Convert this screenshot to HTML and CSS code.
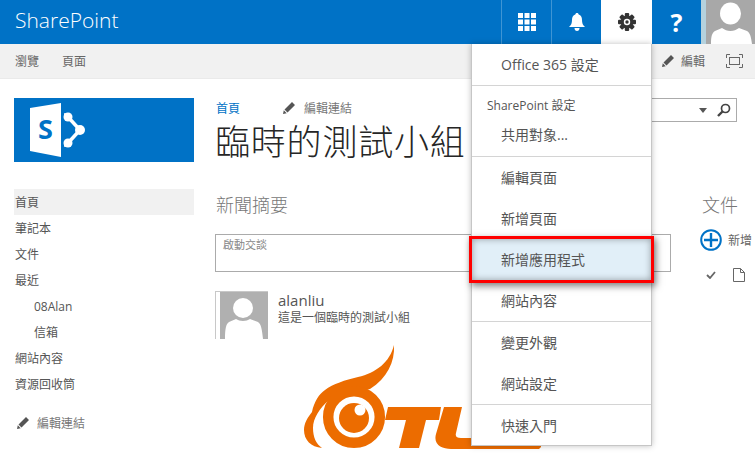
FILE: index.html
```html
<!DOCTYPE html>
<html>
<head>
  <title>臨時的測試小組</title>
  <link rel="stylesheet" href="styles.css">
</head>
<body>
  <div class="topBar">
    <div class="brand">SharePoint</div>
    <div class="tile">
      <svg width="18" height="18" viewBox="0 0 18 18" fill="#fff">
        <rect x="0" y="0" width="5" height="5"/><rect x="6.500" y="0" width="5" height="5"/><rect x="13" y="0" width="5" height="5"/>
        <rect x="0" y="6.500" width="5" height="5"/><rect x="6.500" y="6.500" width="5" height="5"/><rect x="13" y="6.500" width="5" height="5"/>
        <rect x="0" y="13" width="5" height="5"/><rect x="6.500" y="13" width="5" height="5"/><rect x="13" y="13" width="5" height="5"/>
      </svg>
    </div>
    <div class="tile">
      <svg width="16" height="18" viewBox="0 0 16 18" fill="#fff">
        <path d="M8 0c1 0 1.600.6 1.700 1.500C12 2.300 13 4.300 13 7c0 3 .7 5 3 7H0c2.300-2 3-4 3-7 0-2.700 1-4.700 3.300-5.500C6.400.6 7 0 8 0z"/>
        <path d="M5.500 15h5c0 1.700-1 3-2.500 3s-2.500-1.300-2.500-3z"/>
      </svg>
    </div>
    <div class="tile gearTile">
      <svg width="18" height="18" viewBox="0 0 18 18" fill="#333">
        <rect x="6.800" y="0" width="4.400" height="18" rx="1"/>
        <rect x="6.800" y="0" width="4.400" height="18" rx="1" transform="rotate(45 9 9)"/>
        <rect x="6.800" y="0" width="4.400" height="18" rx="1" transform="rotate(90 9 9)"/>
        <rect x="6.800" y="0" width="4.400" height="18" rx="1" transform="rotate(135 9 9)"/>
        <circle cx="9" cy="9" r="6.500"/>
        <circle cx="9" cy="9" r="3.200" fill="#fff"/>
        <circle cx="9" cy="9" r="1.700"/>
      </svg>
    </div>
    <div class="tile helpTile">?</div>
    <div class="meAvatar">
      <svg width="49" height="44" viewBox="0 0 49 44" fill="#fff">
        <ellipse cx="24.500" cy="13.500" rx="10.500" ry="11"/>
        <path d="M5 44c0-8 1-11 4-13l7-3c3 2 5 3 8.500 3s5.500-1 8.500-3l8 3c3 2 4 5 5 13z"/>
      </svg>
    </div>
  </div>

  <div class="subBar">
    <span class="subTab">瀏覽</span>
    <span class="subTab">頁面</span>
    <div class="subRight">
      <svg class="pencil" width="12" height="12" viewBox="0 0 12 12"><path d="M9 0l3 3-7.500 7.500-3-3zM.8 8.300l2.900 2.900L0 12z" fill="#555"/></svg>
      <span class="subEdit">編輯</span>
      <svg class="focus" width="17" height="14" viewBox="0 0 17 14" fill="none" stroke="#666">
        <path d="M.5 4V.5H4M13 .5h3.500V4M16.500 10v3.500H13M4 13.500H.5V10"/>
        <rect x="3.500" y="3.500" width="10" height="7"/>
      </svg>
    </div>
  </div>

  <div class="page">
    <div class="sideCol">
      <div class="siteLogo">
        <svg width="80" height="64" viewBox="0 0 80 64">
          <path d="M16 10l31-5v54l-31-6z" fill="#fff"/>
          <text x="24" y="41" class="logoS">S</text>
          <g fill="none" stroke="#fff" stroke-width="3.500">
            <path d="M54 19l12 13-12 13"/>
            <path d="M50 17h4M50 47h4"/>
          </g>
          <g fill="#fff">
            <circle cx="54" cy="19" r="4.500"/>
            <circle cx="66" cy="32" r="5"/>
            <circle cx="54" cy="45" r="4.500"/>
          </g>
        </svg>
      </div>
      <ul class="nav">
        <li class="active">首頁</li>
        <li>筆記本</li>
        <li>文件</li>
        <li>最近</li>
        <li class="sub">08Alan</li>
        <li class="sub">信箱</li>
        <li>網站內容</li>
        <li>資源回收筒</li>
      </ul>
      <div class="navEdit">
        <svg class="pencil" width="12" height="12" viewBox="0 0 12 12"><path d="M9 0l3 3-7.500 7.500-3-3zM.8 8.300l2.900 2.900L0 12z" fill="#555"/></svg>
        <span>編輯連結</span>
      </div>
    </div>

    <div class="mainCol">
      <div class="titleRow">
        <div>
          <div class="crumbs">
            <a class="crumbHome">首頁</a>
            <svg class="pencil" width="12" height="12" viewBox="0 0 12 12"><path d="M9 0l3 3-7.500 7.500-3-3zM.8 8.300l2.900 2.900L0 12z" fill="#555"/></svg>
            <span class="crumbEdit">編輯連結</span>
          </div>
          <h1>臨時的測試小組</h1>
        </div>
        <div class="searchBox">
          <span class="caret"></span>
          <svg width="14" height="14" viewBox="0 0 14 14" fill="none" stroke="#444">
            <circle cx="8.500" cy="5.500" r="4" stroke-width="1.700"/>
            <path d="M5.500 8.500L1 13" stroke-width="2.400"/>
          </svg>
        </div>
      </div>

      <div class="columns">
        <div class="newsCol">
          <h2>新聞摘要</h2>
          <div class="startBox">啟動交談</div>
          <div class="post">
            <div class="postAvatar">
              <svg width="48" height="47" viewBox="0 0 48 47" fill="#fff">
                <circle cx="23" cy="16" r="10"/>
                <path d="M5 47c0-10 1-15 4-17l7-3c2 1 4 2 7 2s5-1 7-2l8 3c3 2 4 7 5 17z"/>
              </svg>
            </div>
            <div>
              <div class="postName">alanliu</div>
              <div class="postText">這是一個臨時的測試小組</div>
            </div>
          </div>
        </div>
        <div class="docsCol">
          <h2>文件</h2>
          <div class="newDoc">
            <svg width="22" height="22" viewBox="0 0 22 22" fill="none" stroke="#0072c6">
              <circle cx="11" cy="11" r="9.800" stroke-width="2"/>
              <path d="M11 4v14M4 11h14" stroke-width="2.400"/>
            </svg>
            <span>新增</span>
          </div>
          <div class="docRow">
            <svg width="10" height="8" viewBox="0 0 10 8" fill="none" stroke="#666" stroke-width="1.800"><path d="M1 4l3 3 5-6"/></svg>
            <svg width="12" height="14" viewBox="0 0 12 14" fill="#fff" stroke="#666"><path d="M.5.500h7l4 4v9H.5z"/><path d="M7.500.500v4h4" fill="none"/></svg>
          </div>
        </div>
      </div>
    </div>
  </div>

  <!-- watermark stamped on the shot -->
  <svg class="watermark" width="240" height="110" viewBox="303 345 240 110" fill="#ec6c00">
    <path d="M394 345C395 362 387 378 370 389L345 395 328 401C320 408 313 418 313 428 313 437 316 444 322 448 311 447 304 440 304 430 304 423 308 417 312 412 314 402 319 394 325 390 333 384 345 380 358 377 376 373 390 362 394 345z"/>
    <circle cx="354" cy="417" r="25.800" fill="none" stroke="#ec6c00" stroke-width="10.500"/>
    <circle cx="354" cy="418" r="15"/>
    <circle cx="360" cy="410" r="5.500" fill="#fff"/>
    <path d="M388 407h53l-2 13h-13l-7 28h-20l7-28h-21z"/>
    <path d="M444 407h18l-6 26c-1 4 1 5 5 5h40l40-1v10l-2 2h-88c-9 0-18-4-15-15z"/>
  </svg>

  <div class="settingsMenu">
    <div class="menuItem top">Office 365 設定</div>
    <div class="menuGroup">
      <div class="menuHead">SharePoint 設定</div>
      <div class="menuItem share">共用對象...</div>
    </div>
    <div class="menuGroup">
      <div class="menuItem">編輯頁面</div>
      <div class="menuItem">新增頁面</div>
      <div class="menuItem picked">新增應用程式</div>
      <div class="menuItem">網站內容</div>
    </div>
    <div class="menuGroup">
      <div class="menuItem">變更外觀</div>
      <div class="menuItem">網站設定</div>
    </div>
    <div class="menuGroup">
      <div class="menuItem">快速入門</div>
    </div>
  </div>
</body>
</html>
```

FILE: styles.css
```css
html,
body {
  margin: 0;
  padding: 0;
  height: 100%;
  overflow: hidden;
}

body {
  position: relative;
  background-color: #fff;
  color: #555;
  font-family: "Open Sans", "Noto Sans CJK TC", sans-serif;
  font-size: 12px;
}

.topBar {
  display: flex;
  align-items: stretch;
  height: 44px;
  background-color: #0072c6;
}

.brand {
  flex: 1;
  padding-left: 15px;
  color: #fff;
  font-size: 21px;
  font-weight: 300;
  line-height: 40px;
}

.tile {
  display: flex;
  align-items: center;
  justify-content: center;
  width: 49px;
  border-left: 1px solid #3f95d4;
}

.gearTile {
  width: 51px;
  border-left: none;
  background-color: #fff;
}

.helpTile {
  border-left: none;
  color: #fff;
  font-size: 25px;
  font-weight: 700;
}

.meAvatar {
  width: 49px;
  border-left: 5px solid #b5d2de;
  background-color: #a8a8a8;
}

.meAvatar svg {
  display: block;
}

.subBar {
  display: flex;
  align-items: center;
  height: 35px;
  padding-left: 15px;
  background-color: #f1f1f1;
  border-bottom: 1px solid #eaeaea;
  box-sizing: border-box;
  color: #666;
}

.subTab {
  width: 47px;
}

.subRight {
  display: flex;
  align-items: center;
  margin-left: auto;
  margin-right: 12px;
}

.subEdit {
  margin-left: 7px;
  margin-right: 21px;
}

.page {
  display: flex;
  padding-top: 19px;
}

.sideCol {
  width: 180px;
  margin-left: 14px;
  flex-shrink: 0;
}

.siteLogo {
  height: 64px;
  background-color: #0072c6;
}

.siteLogo svg {
  display: block;
}

.logoS {
  fill: #0072c6;
  font-family: "Open Sans", sans-serif;
  font-size: 27px;
  font-weight: 700;
}

.nav {
  list-style: none;
  margin: 27px 0 0;
  padding: 0;
}

.nav li {
  height: 26px;
  line-height: 28px;
  padding-left: 1px;
}

.nav .active {
  background-color: #f1f1f1;
}

.nav .sub {
  padding-left: 20px;
}

.navEdit {
  display: flex;
  align-items: center;
  gap: 8px;
  margin-top: 13px;
  height: 26px;
  padding-left: 3px;
  color: #777;
}

.mainCol {
  flex: 1;
  min-width: 0;
  padding-left: 22px;
  padding-right: 18px;
}

.titleRow {
  display: flex;
  justify-content: space-between;
  align-items: flex-start;
}

.crumbs {
  display: flex;
  align-items: center;
  height: 20px;
}

.crumbHome {
  width: 67px;
  color: #0072c6;
}

.crumbEdit {
  margin-left: 9px;
  color: #777;
}

h1 {
  margin: 2px 0 0 -1px;
  color: #262626;
  font-size: 35px;
  font-weight: 300;
  line-height: 44px;
  letter-spacing: .8px;
  white-space: nowrap;
}

.searchBox {
  display: flex;
  align-items: center;
  justify-content: flex-end;
  gap: 10px;
  width: 200px;
  height: 24px;
  padding-right: 5px;
  border: 1px solid #ababab;
  box-sizing: border-box;
}

.caret {
  border-left: 4px solid transparent;
  border-right: 4px solid transparent;
  border-top: 5px solid #555;
}

.columns {
  display: flex;
  margin-top: 27px;
}

.newsCol {
  width: 455px;
  flex-shrink: 0;
}

.docsCol {
  margin-left: 31px;
  white-space: nowrap;
}

h2 {
  margin: 0;
  color: #777;
  font-size: 18px;
  font-weight: 300;
  line-height: 28px;
}

.startBox {
  margin-top: 15px;
  margin-left: -1px;
  height: 38px;
  padding: 1px 7px;
  border: 1px solid #ababab;
  box-sizing: border-box;
  color: #888;
  font-size: 11px;
}

.post {
  display: flex;
  gap: 10px;
  margin-top: 19px;
  margin-left: -1px;
}

.postAvatar {
  width: 53px;
  height: 48px;
  padding-left: 4px;
  border-left: 1px solid #c8c8c8;
  border-top: 1px solid #c8c8c8;
  box-sizing: border-box;
}

.postAvatar svg {
  display: block;
  background-color: #b0b0b0;
}

.postName {
  font-size: 15px;
  line-height: 19px;
}

.postText {
  line-height: 16px;
}

.newDoc {
  display: flex;
  align-items: center;
  gap: 6px;
  margin-top: 10px;
  margin-left: -2px;
  color: #666;
}

.docRow {
  display: flex;
  align-items: center;
  gap: 17px;
  margin-top: 17px;
  margin-left: 4px;
}

.watermark {
  position: absolute;
  left: 303px;
  top: 345px;
}

.settingsMenu {
  position: absolute;
  left: 471px;
  top: 44px;
  width: 181px;
  height: 402px;
  background-color: #fff;
  border: 1px solid #c6c6c6;
  border-top: none;
  box-sizing: border-box;
  box-shadow: 0 0 6px rgba(0, 0, 0, .25);
}

.menuItem {
  height: 41px;
  line-height: 41px;
  padding-left: 29px;
  font-size: 14px;
}

.menuGroup {
  border-top: 1px solid #d4d4d4;
}

.menuHead {
  height: 28px;
  line-height: 40px;
  padding-left: 15px;
  font-size: 12px;
}

.share {
  height: 42px;
}

.picked {
  position: relative;
  background-color: #e1eff8;
  box-shadow: 0 0 0 3px #f00, 2px 3px 7px 3px rgba(0, 0, 0, .5), inset 0 0 7px rgba(0, 0, 0, .35);
}
```
